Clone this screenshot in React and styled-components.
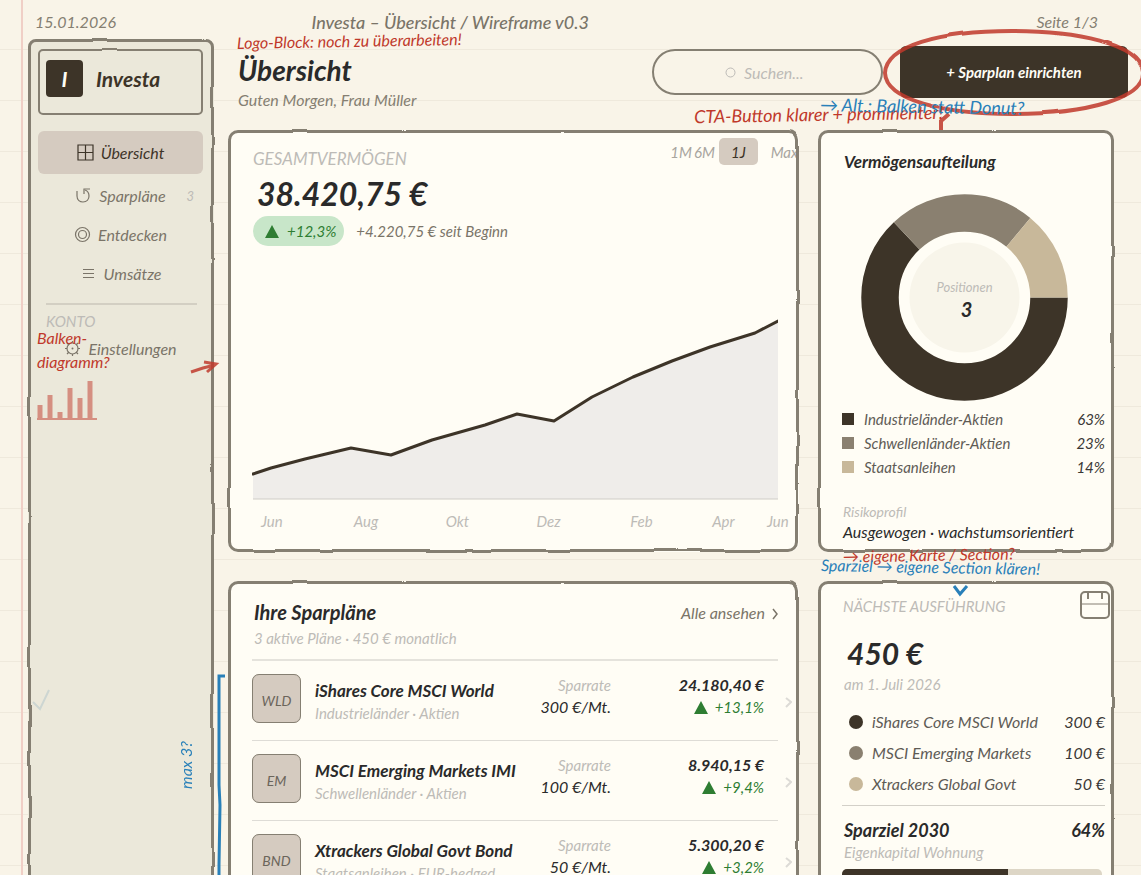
import React from "react";
import styled, { createGlobalStyle } from "styled-components";

const GlobalStyle = createGlobalStyle`
  * {
    box-sizing: border-box;
  }
  body {
    margin: 0;
    background: #f9f4e8;
  }
  body, button, input {
    font-family: "Lato", "Open Sans", sans-serif;
    font-style: italic;
  }
  h1, h2, p, ul {
    margin: 0;
    padding: 0;
  }
  ul {
    list-style: none;
  }
  a {
    color: inherit;
    text-decoration: none;
  }
`;

const ink = "#2a2a2a";
const brown = "#3d3428";
const mid = "#7a7468";
const pale = "#bdbbb7";
const line = "#857f72";
const red = "#c0392b";
const blue = "#2980b9";
const green = "#2e7d32";

const Page = styled.div`
  position: relative;
  min-height: 100vh;
  overflow-x: clip;
  padding: 10px 27px 24px 28px;
  color: ${ink};
  background:
    linear-gradient(90deg, transparent 21px, #f0cfc6 21px, #f0cfc6 23px, transparent 23px),
    repeating-linear-gradient(180deg, transparent 0, transparent 50px, #efe9dc 50px, #efe9dc 51px) 0 -1px;
`;

const Filters = styled.svg`
  position: absolute;
  width: 0;
  height: 0;
`;

const TopLine = styled.div`
  display: grid;
  grid-template-columns: 26% auto 1fr;
  margin-bottom: 5px;
  padding: 0 16px 0 7px;
  font-size: 16px;
  line-height: 24px;
  color: ${line};
`;

const DocTitle = styled.span`
  color: ${mid};
  font-size: 18px;
  font-weight: 500;
`;

const PageNo = styled.span`
  text-align: right;
`;

const Body = styled.div`
  display: grid;
  grid-template-columns: 186px minmax(0, 1fr);
  gap: 14px;
`;

// hand-drawn outline, kept on its own layer so the text stays sharp
const Frame = styled.div`
  position: relative;
  background: ${(props) => props.$fill || "#fffdf5"};
  border-radius: ${(props) => props.$radius || 10}px;
  &::before {
    content: "";
    position: absolute;
    inset: 0;
    border: ${(props) => props.$stroke || 3}px solid ${line};
    border-radius: inherit;
    filter: url(#rough);
    pointer-events: none;
  }
`;

const Sidebar = styled(Frame).attrs({ as: "aside" })`
  padding: 10px 11px 0 10px;
`;

const Logo = styled(Frame)`
  display: flex;
  align-items: center;
  gap: 13px;
  height: 66px;
  padding: 0 8px 8px;
  font-size: 21px;
  font-weight: 700;
  color: ${brown};
`;

const LogoMark = styled.span`
  width: 37px;
  height: 37px;
  border-radius: 4px;
  background: ${brown};
  color: #fffdf5;
  text-align: center;
  line-height: 38px;
`;

const Nav = styled.nav`
  margin-top: 16px;
`;

const NavItem = styled.a`
  position: relative;
  display: flex;
  align-items: center;
  justify-content: center;
  gap: 7px;
  height: ${(props) => (props.$active ? 43 : 39)}px;
  margin-bottom: ${(props) => (props.$active ? 2 : 0)}px;
  border-radius: 6px;
  background: ${(props) => (props.$active ? "#d5cbc0" : "transparent")};
  color: ${(props) => (props.$active ? brown : mid)};
  font-size: 16px;
`;

const NavCount = styled.span`
  position: absolute;
  right: 9px;
  font-size: 13px;
  color: ${pale};
`;

const NavRule = styled.hr`
  height: 2px;
  margin: 10px 6px 6px 8px;
  border: 0;
  background: #d3cfc3;
`;

const NavHeading = styled.p`
  padding-left: 8px;
  font-size: 15px;
  line-height: 20px;
  color: ${pale};
  margin-bottom: -2px;
`;

const Main = styled.main`
  min-width: 0;
`;

const Header = styled.header`
  display: flex;
  align-items: flex-start;
  height: 91px;
  margin-right: -14px;
  padding-top: 7px;
`;

const Greeting = styled.div`
  flex: 1;
  padding: 6px 0 0 10px;
`;

const Title = styled.h1`
  font-size: 28px;
  line-height: 36px;
`;

const Sub = styled.p`
  margin-top: 1px;
  font-size: 16px;
  line-height: 22px;
  color: ${line};
`;

const Search = styled.label`
  display: flex;
  align-items: center;
  justify-content: center;
  gap: 8px;
  width: 231px;
  height: 46px;
  margin: 3px 17px 0 0;
  border: 2px solid ${line};
  border-radius: 23px;
`;

const SearchInput = styled.input`
  width: 66px;
  padding: 0;
  border: 0;
  outline: none;
  background: transparent;
  font-size: 16px;
  &::placeholder {
    color: ${pale};
  }
`;

const CtaWrap = styled.div`
  position: relative;
`;

const Cta = styled.button`
  width: 228px;
  height: 52px;
  border: 0;
  border-radius: 6px;
  background: ${brown};
  color: #fffdf5;
  font-size: 15px;
  font-weight: 700;
`;

const Mark = styled.svg`
  position: absolute;
  overflow: visible;
  fill: none;
  stroke: ${(props) => props.$tone};
  stroke-width: ${(props) => props.$width || 4};
  pointer-events: none;
  z-index: 2;
`;

const EllipseMark = styled(Mark)`
  left: -16px;
  top: -16px;
  filter: url(#rough);
`;

const Note = styled.span`
  position: absolute;
  z-index: 3;
  white-space: nowrap;
  font-size: 16px;
  line-height: 22px;
  color: ${(props) => props.$tone};
`;

const LogoNote = styled(Note)`
  left: 237px;
  top: 30px;
  transform: rotate(-1deg);
`;

const CtaNote = styled(Note)`
  right: 185px;
  top: 57px;
  font-size: 18px;
  transform: rotate(-1deg);
`;

const DonutNote = styled(Note)`
  left: 2px;
  top: -35px;
  font-size: 18px;
  transform: rotate(1deg);
`;

const CardNote = styled(Note)`
  left: 25px;
  bottom: -14px;
  transform: rotate(-1deg);
`;

const GoalNote = styled(Note)`
  left: 3px;
  top: -25px;
  transform: rotate(1deg);
`;

const BarsNote = styled(Note)`
  left: 9px;
  top: 287px;
  line-height: 24px;
`;

const MaxNote = styled(Note)`
  right: 17px;
  top: 702px;
  writing-mode: vertical-rl;
  transform: rotate(180deg);
`;

const BarsMark = styled(Mark)`
  left: 8px;
  top: 342px;
`;

const ArrowMark = styled(Mark)`
  left: 163px;
  top: 322px;
`;

const CheckMark = styled(Mark)`
  left: 4px;
  top: 650px;
`;

const BracketMark = styled(Mark)`
  left: -10px;
  top: 94px;
`;

const HookMark = styled(Mark)`
  left: 135px;
  top: 4px;
`;

const Cards = styled.div`
  display: grid;
  grid-template-columns: minmax(0, 1fr) 296px;
  gap: 29px 19px;
`;

const WealthCard = styled(Frame).attrs({ as: "section" })`
  padding: 8px 21px 21px 24px;
`;

const WealthHead = styled.div`
  display: flex;
  justify-content: space-between;
  height: 31px;
  margin-right: -21px;
`;

const Caps = styled.h2`
  padding: ${(props) => props.$drop}px 0 0 1px;
  font-size: ${(props) => props.$size}px;
  font-weight: 400;
  line-height: 20px;
  text-transform: uppercase;
  color: ${pale};
`;

const Ranges = styled.div`
  display: flex;
  align-items: center;
  height: 27px;
`;

const Range = styled.button`
  height: 27px;
  padding: 0 ${(props) => (props.$on ? 12 : 1)}px;
  margin-left: ${(props) => (props.$on ? 3 : 0)}px;
  border: 0;
  border-radius: 5px;
  background: ${(props) => (props.$on ? "#d5cbc0" : "transparent")};
  color: ${(props) => (props.$on ? brown : "#a8a59f")};
  font-size: 15px;
  &:last-child {
    margin-left: 12px;
  }
`;

const Amount = styled.p`
  margin-top: ${(props) => props.$gap}px;
  padding-left: 5px;
  font-size: ${(props) => (props.$big ? 32 : 30)}px;
  font-weight: 700;
  line-height: ${(props) => (props.$big ? 40 : 36)}px;
`;

const Delta = styled.div`
  display: flex;
  align-items: center;
  gap: 12px;
  margin: 2px 0 0 1px;
  font-size: 15px;
  color: ${mid};
`;

const Badge = styled.span`
  display: flex;
  align-items: center;
  gap: 8px;
  height: 30px;
  padding: 0 8px 0 12px;
  border-radius: 15px;
  background: #c8e6c9;
  color: ${green};
`;

const Chart = styled.svg`
  display: block;
  width: 100%;
  height: 254px;
`;

const Months = styled.div`
  display: grid;
  grid-template-columns: 93fr 92fr 91fr 94fr 82fr 55fr 22fr;
  margin: 11px -11px 0 9px;
  font-size: 15px;
  line-height: 20px;
  color: ${pale};
`;

const SplitCard = styled(Frame).attrs({ as: "section" })`
  display: flex;
  flex-direction: column;
  padding: 20px 9px 10px 24px;
`;

const CardTitle = styled.h2`
  font-size: ${(props) => props.$size}px;
  line-height: 24px;
  padding-left: 2px;
`;

const DonutBox = styled.div`
  position: relative;
  align-self: center;
  width: 207px;
  height: 207px;
  margin: 20px 18px 6px 0;
`;

const DonutText = styled.div`
  position: absolute;
  inset: 83px 0 auto;
  text-align: center;
  font-size: 13px;
  line-height: 20px;
  color: ${pale};
`;

const DonutCount = styled.strong`
  display: block;
  padding-left: 4px;
  font-size: 20px;
  line-height: 24px;
  color: ${ink};
`;

const LegendRow = styled.li`
  display: flex;
  align-items: center;
  gap: 10px;
  font-size: ${(props) => props.$size}px;
  line-height: ${(props) => props.$height}px;
  color: #5e5b55;
`;

const Swatch = styled.i`
  width: 12px;
  height: 12px;
  background: ${(props) => props.$color};
`;

const Dot = styled.i`
  width: 14px;
  height: 14px;
  margin: 0 -1px 0 7px;
  border-radius: 50%;
  background: ${(props) => props.$color};
`;

const RowValue = styled.span`
  margin-left: auto;
  color: #3a3835;
`;

const Risk = styled.p`
  margin-top: 23px;
  padding-left: 1px;
  font-size: 14px;
  line-height: 20px;
  color: ${pale};
`;

const RiskValue = styled.p`
  padding-left: 1px;
  font-size: 16px;
  line-height: 20px;
`;

const PlansCard = styled(Frame).attrs({ as: "section" })`
  padding: 19px 21px 0 24px;
`;

const PlansHead = styled.div`
  display: flex;
  justify-content: space-between;
  padding-bottom: 11px;
  border-bottom: 2px solid #e5e3dc;
`;

const Muted = styled.p`
  padding-left: 2px;
  margin-top: ${(props) => props.$gap || 0}px;
  font-size: 15px;
  line-height: 20px;
  color: ${pale};
`;

const MoreLink = styled.a`
  display: flex;
  gap: 7px;
  font-size: 16px;
  line-height: 26px;
  color: ${mid};
`;

const Plan = styled.li`
  display: grid;
  grid-template-columns: 63px minmax(0, 1fr) 72px 153px;
  height: 80px;
  padding-top: 13px;
  position: relative;
  margin-right: 14px;
  &::after {
    content: "";
    position: absolute;
    left: 0;
    right: -14px;
    bottom: 0;
    height: 1px;
    background: #dedcd6;
  }
`;

const Tile = styled(Frame)`
  width: 49px;
  height: 49px;
  line-height: 53px;
  text-align: center;
  font-size: 14px;
  color: #6b655b;
`;

const PlanName = styled.div`
  padding-top: 5px;
  font-size: 17px;
  font-weight: 700;
  line-height: 24px;
  white-space: nowrap;
`;

const PlanKind = styled.p`
  font-size: 15px;
  font-weight: 400;
  line-height: 20px;
  color: ${pale};
`;

const Figures = styled.div`
  display: flex;
  flex-direction: column;
  align-items: flex-end;
  font-size: ${(props) => props.$size}px;
  line-height: 22px;
  white-space: nowrap;
`;

const RateLabel = styled.span`
  font-size: 15px;
  color: ${pale};
`;

const Worth = styled.strong`
  font-size: 16px;
`;

const Gain = styled.span`
  display: flex;
  align-items: center;
  gap: 7px;
  color: ${green};
`;

const RowChevron = styled.svg`
  position: absolute;
  right: -28px;
  top: 36px;
`;

const NextCard = styled(Frame).attrs({ as: "section" })`
  padding: 9px 9px 24px 24px;
`;

const NextHead = styled.div`
  display: flex;
  justify-content: space-between;
  margin-right: -5px;
`;

const NextList = styled.ul`
  margin-top: 12px;
`;

const Goal = styled.div`
  display: flex;
  justify-content: space-between;
  margin-top: 6px;
  padding: 12px 0 0 2px;
  border-top: 1px solid #d3d0c8;
  font-size: 18px;
  font-weight: 700;
  line-height: 24px;
`;

const Track = styled.div`
  height: 14px;
  margin: 7px 3px 0 0;
  border-radius: 5px;
  background: #ddd6c6;
  overflow: hidden;
`;

const Fill = styled.div`
  height: 100%;
  background: ${brown};
`;

const Triangle = () => (
  <svg width="14" height="13" viewBox="0 0 14 13" fill={green}>
    <path d="M7 0 L14 13 H0 Z" />
  </svg>
);

const icons = {
  grid: <path d="M1 1h15v15H1zM8.500 1v15M1 8.500h15" />,
  loop: (
    <g>
      <path d="M2 4v5c0 4 3 6 6 6 4 0 6-3 6-6 0-3-1-5-4-6" />
      <path d="M15 2H9v5" />
    </g>
  ),
  target: (
    <g>
      <circle cx="8.500" cy="8.500" r="7" />
      <circle cx="8.500" cy="8.500" r="4" />
    </g>
  ),
  lines: <path d="M3 4.500h11M3 8.500h11M3 12.500h11" />,
  gear: (
    <g>
      <circle cx="8.500" cy="8.500" r="5.500" />
      <circle cx="8.500" cy="8.500" r="1" fill="currentColor" stroke="none" />
      <path d="M8.500 1v2M8.500 14v2M1 8.500h2M14 8.500h2M3 3l2 2M12 12l2 2M3 14l2-2M12 5l2-2" />
    </g>
  ),
};

const NavIcon = ({ name }) => (
  <svg width="17" height="17" viewBox="0 0 17 17" fill="none" stroke="currentColor" strokeWidth="1.2">
    {icons[name]}
  </svg>
);

const navItems = [
  { label: "Übersicht", icon: "grid", active: true },
  { label: "Sparpläne", icon: "loop", count: 3 },
  { label: "Entdecken", icon: "target" },
  { label: "Umsätze", icon: "lines" },
];

const split = [
  { label: "Industrieländer-Aktien", share: 63, color: brown },
  { label: "Schwellenländer-Aktien", share: 23, color: "#8a8070" },
  { label: "Staatsanleihen", share: 14, color: "#c8b89a" },
];

const plans = [
  { code: "WLD", name: "iShares Core MSCI World", kind: "Industrieländer · Aktien", rate: "300 €/Mt.", worth: "24.180,40 €", gain: "+13,1%" },
  { code: "EM", name: "MSCI Emerging Markets IMI", kind: "Schwellenländer · Aktien", rate: "100 €/Mt.", worth: "8.940,15 €", gain: "+9,4%" },
  { code: "BND", name: "Xtrackers Global Govt Bond", kind: "Staatsanleihen · EUR-hedged", rate: "50 €/Mt.", worth: "5.300,20 €", gain: "+3,2%" },
];

const nextRuns = [
  { label: "iShares Core MSCI World", value: "300 €", color: brown },
  { label: "MSCI Emerging Markets", value: "100 €", color: "#8a8070" },
  { label: "Xtrackers Global Govt", value: "50 €", color: "#c8b89a" },
];

const curve = "1,228 19,222 53,213 99,202 139,209 180,194 233,179 265,168 302,175 340,151 381,131 420,115 458,101 503,87 526,75";

const Donut = () => {
  let start = 0;
  return (
    <svg width="207" height="207" viewBox="0 0 207 207" fill="none">
      {split.map((part) => {
        const offset = -start;
        start += part.share;
        return (
          <circle
            key={part.label}
            cx="103.5"
            cy="103.5"
            r="84.5"
            pathLength="100"
            stroke={part.color}
            strokeWidth="37.5"
            strokeDasharray={`${part.share} ${100 - part.share}`}
            strokeDashoffset={offset}
          />
        );
      })}
      <circle cx="103.5" cy="103.5" r="55" fill="#f8f5ea" />
    </svg>
  );
};

const App = () => {
  return (
    <Page>
      <GlobalStyle />
      <Filters aria-hidden="true">
        <filter id="rough" x="-2%" y="-2%" width="104%" height="104%" colorInterpolationFilters="sRGB">
          <feTurbulence type="fractalNoise" baseFrequency="0.02" numOctaves="2" seed="7" result="noise" />
          <feDisplacementMap in="SourceGraphic" in2="noise" scale="3" xChannelSelector="R" yChannelSelector="G" />
        </filter>
      </Filters>

      <TopLine>
        <span>15.01.2026</span>
        <DocTitle>Investa – Übersicht / Wireframe v0.3</DocTitle>
        <PageNo>Seite 1/3</PageNo>
      </TopLine>
      <LogoNote $tone={red}>Logo-Block: noch zu überarbeiten!</LogoNote>

      <Body>
        <Sidebar $fill="#ebe8da" $radius={8}>
          <Logo $fill="transparent" $radius={5} $stroke={2}>
            <LogoMark>I</LogoMark>
            Investa
          </Logo>
          <Nav>
            {navItems.map((item) => (
              <NavItem key={item.label} href="#" $active={item.active}>
                <NavIcon name={item.icon} />
                {item.label}
                {item.count ? <NavCount>{item.count}</NavCount> : null}
              </NavItem>
            ))}
            <NavRule />
            <NavHeading>KONTO</NavHeading>
            <NavItem href="#">
              <NavIcon name="gear" />
              Einstellungen
            </NavItem>
          </Nav>
          <BarsNote $tone={red}>
            Balken-
            <br />
            diagramm?
          </BarsNote>
          <BarsMark $tone={red} $width={5} width="62" height="40" opacity="0.5">
            <path d="M4 24v14M14 14v24M24 31v7M34 7v31M44 17v21M54 0v38" />
            <path d="M1 38h60" strokeWidth="2" />
          </BarsMark>
          <ArrowMark $tone={red} $width={3} width="28" height="16" opacity="0.85">
            <path d="M0 11l12-4 12-3M13 1l12 2-9 8" />
          </ArrowMark>
          <CheckMark $tone="#cdd6d2" $width={2} width="20" height="22">
            <path d="M1 13l7 7L17 1" />
          </CheckMark>
          <MaxNote $tone={blue}>max 3?</MaxNote>
        </Sidebar>

        <Main>
          <Header>
            <Greeting>
              <Title>Übersicht</Title>
              <Sub>Guten Morgen, Frau Müller</Sub>
            </Greeting>
            <Search>
              <svg width="11" height="11" fill="none" stroke={pale}>
                <circle cx="5.5" cy="5.5" r="4.500" />
              </svg>
              <SearchInput type="text" placeholder="Suchen..." aria-label="Suchen" />
            </Search>
            <CtaWrap>
              <Cta>+ Sparplan einrichten</Cta>
              <EllipseMark $tone={red} width="260" height="102" opacity="0.85">
                <path d="M1 43C2 16 55 1 128 1c62 0 128 12 131 41 2 26-56 42-131 42C60 84 2 70 1 43z" />
                <path d="M57 100V91l8-7" />
              </EllipseMark>
              <CtaNote $tone={red}>CTA-Button klarer + prominenter!</CtaNote>
            </CtaWrap>
          </Header>

          <Cards>
            <WealthCard>
              <WealthHead>
                <Caps $size={17} $drop={11}>Gesamtvermögen</Caps>
                <Ranges>
                  <Range>1M</Range>
                  <Range>6M</Range>
                  <Range $on>1J</Range>
                  <Range>Max</Range>
                </Ranges>
              </WealthHead>
              <Amount $big $gap={5}>38.420,75 €</Amount>
              <Delta>
                <Badge>
                  <Triangle />
                  +12,3%
                </Badge>
                +4.220,75 € seit Beginn
              </Delta>
              <Chart viewBox="0 0 526 254" preserveAspectRatio="none">
                <polygon points={`${curve} 526,253 1,253`} fill="#efedea" />
                <path d="M1 253H526" stroke="#cfcdc8" />
                <polyline points={curve} fill="none" stroke={brown} strokeWidth="3" strokeLinejoin="round" strokeLinecap="round" />
              </Chart>
              <Months>
                <span>Jun</span>
                <span>Aug</span>
                <span>Okt</span>
                <span>Dez</span>
                <span>Feb</span>
                <span>Apr</span>
                <span>Jun</span>
              </Months>
            </WealthCard>

            <SplitCard>
              <DonutNote $tone={blue}>→ Alt.: Balken statt Donut?</DonutNote>
              <CardTitle $size={17}>Vermögensaufteilung</CardTitle>
              <DonutBox>
                <Donut />
                <DonutText>
                  Positionen
                  <DonutCount>3</DonutCount>
                </DonutText>
              </DonutBox>
              <ul>
                {split.map((part) => (
                  <LegendRow key={part.label} $size={15} $height={24}>
                    <Swatch $color={part.color} />
                    {part.label}
                    <RowValue>{part.share}%</RowValue>
                  </LegendRow>
                ))}
              </ul>
              <Risk>Risikoprofil</Risk>
              <RiskValue>Ausgewogen · wachstumsorientiert</RiskValue>
              <CardNote $tone={red}>→ eigene Karte / Section?</CardNote>
            </SplitCard>

            <PlansCard>
              <BracketMark $tone={blue} $width={3} width="8" height="300">
                <path d="M7 1H1V110l1 20-1 60V300" />
              </BracketMark>
              <PlansHead>
                <div>
                  <CardTitle $size={20}>Ihre Sparpläne</CardTitle>
                  <Muted $gap={4}>3 aktive Pläne · 450 € monatlich</Muted>
                </div>
                <MoreLink href="#">
                  Alle ansehen
                  <svg width="6" height="26" fill="none" stroke={mid} strokeWidth="1.5">
                    <path d="M1 9l4 5-4 5" />
                  </svg>
                </MoreLink>
              </PlansHead>
              <ul>
                {plans.map((plan) => (
                  <Plan key={plan.code}>
                    <Tile $fill="#d5cbc0" $radius={7} $stroke={1}>{plan.code}</Tile>
                    <PlanName>
                      {plan.name}
                      <PlanKind>{plan.kind}</PlanKind>
                    </PlanName>
                    <Figures $size={16}>
                      <RateLabel>Sparrate</RateLabel>
                      {plan.rate}
                    </Figures>
                    <Figures $size={15}>
                      <Worth>{plan.worth}</Worth>
                      <Gain>
                        <Triangle />
                        {plan.gain}
                      </Gain>
                    </Figures>
                    <RowChevron width="7" height="11" fill="none" stroke="#dddbd6" strokeWidth="2">
                      <path d="M1 1l5 4-5 5" />
                    </RowChevron>
                  </Plan>
                ))}
              </ul>
            </PlansCard>

            <NextCard>
              <GoalNote $tone={blue}>Sparziel → eigene Section klären!</GoalNote>
              <HookMark $tone={blue} $width={3} width="15" height="11">
                <path d="M1 1l6 8 7-8" />
              </HookMark>
              <NextHead>
                <Caps $size={15} $drop={6}>Nächste Ausführung</Caps>
                <svg width="30" height="30" fill="none" stroke={line} strokeWidth="2">
                  <rect x="1" y="2" width="28" height="26" rx="4" />
                  <path d="M1 14h28" strokeWidth="1" />
                  <path d="M8 2v7M22 2v7" />
                </svg>
              </NextHead>
              <Amount $gap={15}>450 €</Amount>
              <Muted $gap={3}>am 1. Juli 2026</Muted>
              <NextList>
                {nextRuns.map((run) => (
                  <LegendRow key={run.label} $size={16} $height={31}>
                    <Dot $color={run.color} />
                    {run.label}
                    <RowValue>{run.value}</RowValue>
                  </LegendRow>
                ))}
              </NextList>
              <Goal>
                <span>Sparziel 2030</span>
                <span>64%</span>
              </Goal>
              <Muted>Eigenkapital Wohnung</Muted>
              <Track>
                <Fill style={{ width: "64%" }} />
              </Track>
            </NextCard>
          </Cards>
        </Main>
      </Body>
    </Page>
  );
};

export default App;
